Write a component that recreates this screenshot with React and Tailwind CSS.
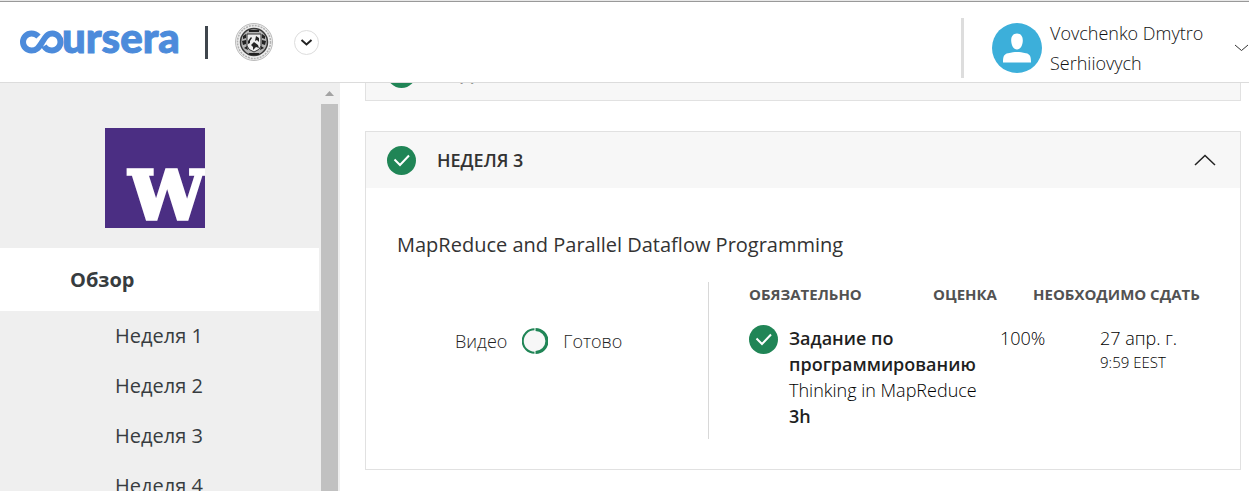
const weeks = ['Неделя 1', 'Неделя 2', 'Неделя 3', 'Неделя 4'];

function CheckBadge() {
  return (
    <svg className="size-[29px] shrink-0" viewBox="0 0 29 29" aria-hidden="true">
      <circle cx="14.5" cy="14.5" r="14.5" fill="#208556" />
      <path d="M7.5 13.5 13 19 22 9.5" fill="none" stroke="#fff" strokeWidth="2" />
    </svg>
  );
}

function Wordmark() {
  return (
    <svg className="h-9 w-[160px] overflow-visible" viewBox="0 0 160 36" role="img" aria-label="coursera">
      <path
        d="M18.5 12.500C16 10 13.500 9.500 11.500 9.500C6.500 9.500 3 13.500 3 18C3 22.500 6.500 26.500 11.500 26.500C17 26.500 19 23 22 18.500C25 13.500 27 9.500 32.500 9.500C37 9.500 40.500 13.500 40.500 18C40.500 22.500 37 26.500 32 26.500C28 26.500 25.500 24.500 24 22"
        fill="none"
        stroke="#4c8bdb"
        strokeWidth="6"
      />
      <text x="42" y="29" fontSize="42" fontWeight="900" fill="#4c8bdb" stroke="#4c8bdb" strokeWidth="1" fontFamily="Lato, sans-serif">
        ursera
      </text>
    </svg>
  );
}

function Seal() {
  return (
    <svg className="size-10" viewBox="0 0 40 40" aria-hidden="true">
      <circle cx="20" cy="20" r="18.500" fill="#eee" stroke="#bbb" strokeWidth="1" />
      <circle cx="20" cy="20" r="16.500" fill="none" stroke="#b0b0b0" strokeWidth="1.500" strokeDasharray="2 1" />
      <circle cx="20" cy="20" r="13.500" fill="#b5b5b5" stroke="#3a3a3a" strokeWidth="1.500" />
      <path d="M13 12h14v12q-1 4-7 6q-6-2-7-6z" fill="#ececec" stroke="#333" />
      <path d="M15 8h10v2H15zM9 14l3-2v4l-3 1zM31 14l-3-2v4l3 1zM8 19l4-1v4l-3 1zM32 19l-4-1v4l3 1zM10 26l3-2 1 4zM30 26l-3-2-1 4zM14 19l3-4 1 1-2 3 0 2-2 1zM22 14l3 2 0 4-2-2-2 1zM17 23l3-3 4 3 1 3-3-1-3 3 0-3zM15 31h10v2H15z" fill="#222" />
    </svg>
  );
}

export default function App() {
  return (
    <div className="flex h-screen flex-col overflow-hidden border-t border-[#e8e8e8] bg-white font-['Open_Sans',sans-serif] text-[#333]">
      <header className="flex h-[82px] shrink-0 items-center border-t border-b border-t-[#999] border-b-[#dcdcdc] pl-5">
        <a href="#" aria-label="coursera"><Wordmark /></a>
        <span className="ml-[25px] h-[33px] w-[3px] bg-[#3f464d]" />
        <a href="#" className="ml-[26px]" aria-label="Университет"><Seal /></a>
        <button className="ml-5 flex size-[25px] items-center justify-center rounded-full border border-[#ddd]" aria-label="Организации">
          <svg width="13" height="9" viewBox="0 0 13 9" aria-hidden="true"><path d="M1.500 2 6.500 6.500 11.500 2" fill="none" stroke="#222" strokeWidth="2" /></svg>
        </button>
        <button className="mt-3 ml-auto flex h-[60px] items-center border-l-[3px] border-[#ddd] pl-7 text-left">
          <svg className="size-[50px] shrink-0" viewBox="0 0 50 50" aria-hidden="true">
            <circle cx="25" cy="25" r="25" fill="#3cafda" />
            <path d="M25 10.500c4 0 6 3 5.800 7.500-.3 4.500-2.300 8.500-5.800 8.500s-5.500-4-5.800-8.500C19 13.500 21 10.500 25 10.500zM11 39.500c0-6 1-8.500 5-9.200 4-.8 6-1.300 9-1.300s5 .5 9 1.300c4 .7 5 3.200 5 9.200z" fill="#fff" />
          </svg>
          <span className="ml-2 w-[180px] text-lg leading-[30px] font-light text-[#111]">Vovchenko Dmytro Serhiiovych</span>
          <svg className="ml-1 h-2 w-[15px] shrink-0" viewBox="0 0 15 8" aria-hidden="true"><path d="M1 1 7.500 6.500 14 1" fill="none" stroke="#333" /></svg>
        </button>
      </header>

      <div className="flex min-h-0 flex-1">
        <aside className="flex w-[340px] shrink-0 overflow-hidden bg-[#efefef]">
          <nav className="flex w-[319px] flex-col pt-[45px] text-xl text-[#373c3f]">
            <svg className="mb-5 ml-[105px] size-[100px] shrink-0" viewBox="0 0 100 100" role="img" aria-label="University of Washington">
              <rect width="100" height="100" fill="#4b2e83" />
              <text x="24" y="91" fontSize="68" fontWeight="700" fill="#fff" stroke="#fff" strokeWidth="3.500" fontFamily="DejaVu Serif, serif">W</text>
            </svg>
            <a href="#" className="bg-white pl-[70px] font-bold leading-[63px]">Обзор</a>
            {weeks.map((week) => (
              <a key={week} href="#" className="pl-[115px] leading-[50px]">{week}</a>
            ))}
          </nav>
          <div className="ml-0.5 flex w-[17px] flex-col items-center">
            <svg className="my-2 h-[5px] w-[9px] shrink-0" viewBox="0 0 9 5" aria-hidden="true"><path d="M0 5 4.500 0 9 5z" fill="#a3a3a3" /></svg>
            <div className="w-full flex-1 bg-[#c1c1c1]" />
          </div>
        </aside>

        <main className="min-w-0 flex-1 pr-2 pl-[25px]">
          <section className="flex h-[18px] items-end overflow-hidden border border-t-0 border-[#e1e1e1] bg-[#f7f7f7]">
            <div className="flex h-[41px] shrink-0 items-start pl-[21px]">
              <CheckBadge />
              <h2 className="ml-[21px] text-lg leading-[29px] font-semibold">НЕДЕЛЯ 2</h2>
            </div>
          </section>

          <section className="mt-[30px] border border-[#e1e1e1]">
            <button className="flex h-14 w-full items-center bg-[#f7f7f7] pr-6 pl-[21px]">
              <CheckBadge />
              <span className="ml-[21px] text-lg leading-7 font-semibold">НЕДЕЛЯ 3</span>
              <svg className="ml-auto h-3 w-[22px]" viewBox="0 0 22 12" aria-hidden="true"><path d="M1 11 11 1.500 21 11" fill="none" stroke="#222" strokeWidth="1.500" /></svg>
            </button>
            <div className="px-[31px] pt-[43px] pb-[30px]">
              <h3 className="text-xl leading-7">MapReduce and Parallel Dataflow Programming</h3>
              <div className="mt-[23px] flex">
                <div className="flex h-[157px] w-[312px] shrink-0 items-start border-r border-[#d8d8d8] pt-[45px] pl-[58px] text-lg leading-7 font-light text-[#222]">
                  <span>Видео</span>
                  <svg className="mx-[15px] h-7 w-[26px]" viewBox="0 0 25 25" aria-hidden="true">
                    <circle cx="12.500" cy="12.500" r="12" fill="#f7f7f7" />
                    <path d="M12 1.200a11.300 11.300 0 0 0 0 22.600" fill="none" stroke="#208556" strokeWidth="2" />
                    <path d="M13 1.500a11 11 0 0 1 0 22" fill="none" stroke="#208556" strokeWidth="3" />
                  </svg>
                  <span>Готово</span>
                </div>
                <table className="ml-10 min-w-0 flex-1 table-fixed self-start text-left text-lg leading-[26px] text-black">
                  <colgroup>
                    <col className="w-[184px]" />
                    <col className="w-[67px]" />
                    <col className="w-[33px]" />
                    <col className="w-[67px]" />
                    <col />
                  </colgroup>
                  <thead className="text-[15px] leading-6 whitespace-nowrap text-[#525252]">
                    <tr>
                      <th className="font-bold">ОБЯЗАТЕЛЬНО</th>
                      <th className="font-bold" colSpan={2}>ОЦЕНКА</th>
                      <th className="font-bold" colSpan={2}>НЕОБХОДИМО СДАТЬ</th>
                    </tr>
                  </thead>
                  <tbody className="align-top font-light">
                    <tr>
                      <td className="pt-[19px]" colSpan={2}>
                        <div className="flex gap-[11px]">
                          <CheckBadge />
                          <div className="whitespace-nowrap">
                            <strong className="block font-semibold text-[#1f1f1f]">Задание по<br />программированию</strong>
                            <a href="#" className="block">Thinking in MapReduce</a>
                            <strong className="block font-semibold text-[#1f1f1f]">3h</strong>
                          </div>
                        </div>
                      </td>
                      <td className="pt-[19px]" colSpan={2}>100%</td>
                      <td className="pt-[19px]">
                        27 апр. г.
                        <div className="text-[15px] leading-[22px]">9:59 EEST</div>
                      </td>
                    </tr>
                  </tbody>
                </table>
              </div>
            </div>
          </section>
        </main>
      </div>
    </div>
  );
}
